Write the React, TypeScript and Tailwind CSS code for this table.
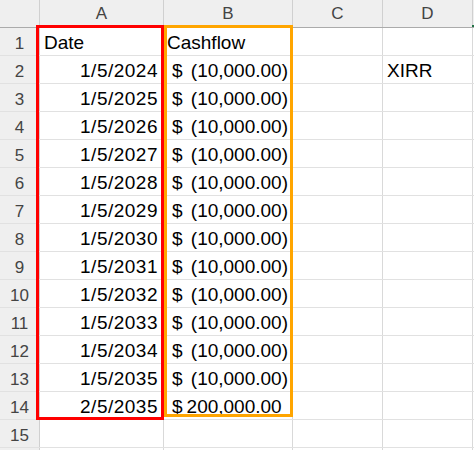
import { FC } from 'react'

const dates = [
	'1/5/2024', '1/5/2025', '1/5/2026', '1/5/2027', '1/5/2028', '1/5/2029',
	'1/5/2030', '1/5/2031', '1/5/2032', '1/5/2033', '1/5/2034', '1/5/2035', '2/5/2035',
]

const cols = ['A', 'B', 'C', 'D']
const widths = ['w-[124px]', 'w-[129px]', 'w-[90px]', 'w-[90px]']

const Money: FC<{ value: string; neg: boolean }> = ({ value, neg }) => (
	<div className="flex h-full w-full items-end justify-between pb-[3px] pl-[8px] pr-[4px]">
		<span>$</span>
		<span>
			{neg ? `(${value})` : value}
			{!neg && <span className="invisible">)</span>}
		</span>
	</div>
)

const Cell: FC<{ w: string; children?: React.ReactNode; className?: string }> = ({ w, children, className = '' }) => (
	<div className={`${w} h-full shrink-0 border-r border-[#d9d9d9] flex items-end pb-[3px] ${className}`}>{children}</div>
)

const App: FC = () => {
	const rows = Array.from({ length: 16 }, (_, i) => i + 1)

	return (
		<div className="relative h-[450px] w-[474px] overflow-hidden bg-white text-[19px] leading-[19px] text-black" style={{ fontFamily: '"Liberation Sans", Arial, sans-serif' }}>
			{/* column headers */}
			<div className="flex h-[28px] border-b border-[#ababab] bg-[#efefef] text-[17px] leading-[17px] text-[#444]">
				<div className="h-full w-[40px] shrink-0 border-r border-[#d0d0d0]" />
				{cols.map((c, i) => (
					<div key={c} className={`${widths[i]} flex h-full shrink-0 items-end justify-center border-r border-[#d0d0d0] pb-[5px]`}>
						{c}
					</div>
				))}
				<div className="flex-1" />
			</div>

			{rows.map((r) => {
				const di = r - 2
				return (
					<div key={r} className="flex h-[28px] border-b border-[#e1e1e1]">
						<div className="flex h-full w-[40px] shrink-0 items-end justify-center border-r border-[#d0d0d0] bg-[#efefef] pb-[3px] text-[17px] leading-[17px] text-[#444]">
							{r < 16 ? r : ''}
						</div>
						<Cell w={widths[0]} className={r === 1 ? 'pl-[4px]' : 'justify-end pr-[5px] tracking-[0.5px]'}>
							{r === 1 ? 'Date' : dates[di] ?? ''}
						</Cell>
						<div className="flex h-full w-[129px] shrink-0 border-r border-[#d9d9d9]">
							{r === 1 && <div className="flex items-end pb-[3px] pl-[3px]">Cashflow</div>}
							{r >= 2 && r <= 14 && <Money value={r === 14 ? '200,000.00' : '10,000.00'} neg={r !== 14} />}
						</div>
						<Cell w={widths[2]} />
						<Cell w={widths[3]} className="pl-[4px]">{r === 2 ? 'XIRR' : ''}</Cell>
						<div className="flex-1" />
					</div>
				)
			})}

			{/* highlight boxes */}
			<div className="absolute left-[36px] top-[25px] h-[395px] w-[128px] border-[3px] border-[#ff0000]" />
			<div className="absolute left-[164px] top-[25px] h-[392px] w-[129px] border-[3px] border-[#ffa500]" />
			<div className="absolute left-[472px] top-[25px] h-[2px] w-[2px] bg-[#217346]" />
		</div>
	)
}

export default App
